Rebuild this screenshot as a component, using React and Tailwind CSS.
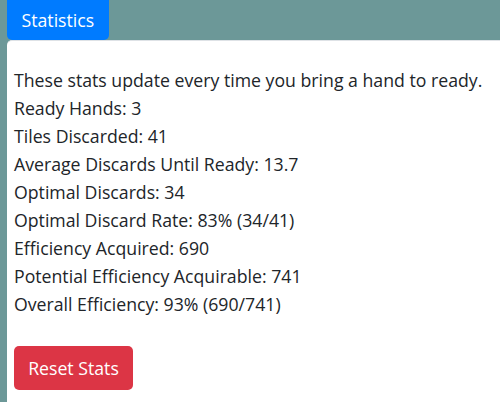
export default function App() {
  const lines = [
    "These stats update every time you bring a hand to ready.",
    "Ready Hands: 3",
    "Tiles Discarded: 41",
    "Average Discards Until Ready: 13.7",
    "Optimal Discards: 34",
    "Optimal Discard Rate: 83% (34/41)",
    "Efficiency Acquired: 690",
    "Potential Efficiency Acquirable: 741",
    "Overall Efficiency: 93% (690/741)",
  ];
  return (
    <div className="w-[500px] h-[402px] bg-[#6c9898] overflow-hidden pl-[7px] flex flex-col" style={{ fontFamily: '"Open Sans", sans-serif' }}>
      <div className="flex">
        <div className="bg-[#007bff] text-white text-[17.7px] leading-[28px] px-[14.5px] py-[6px] rounded-b-[5px] h-[40px]">Statistics</div>
      </div>
      <div className="flex-1 bg-white border-t border-[#dee2e6] rounded-tl-[5px] px-[7px] pt-[25px]">
        <div className="text-[17.7px] leading-[28px] text-[#212529]">
          {lines.map((l) => (
            <div key={l}>{l}</div>
          ))}
        </div>
        <button className="mt-[28px] bg-[#dc3545] text-white text-[17.7px] leading-[28px] w-[119px] h-[44px] rounded-[5px]">Reset Stats</button>
      </div>
    </div>
  );
}
